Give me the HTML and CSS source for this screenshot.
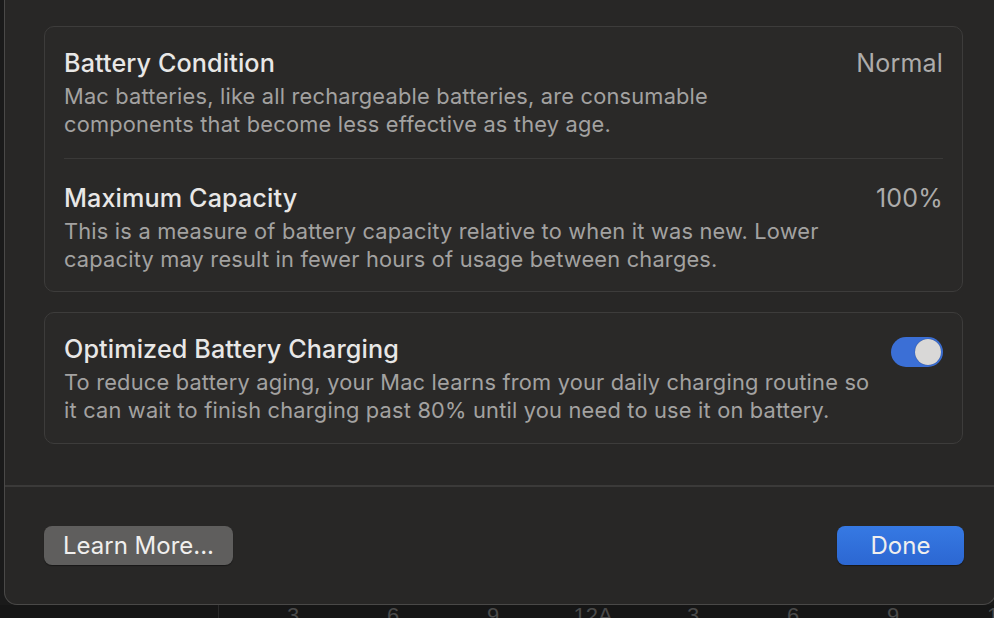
FILE: index.html
```html
<!DOCTYPE html>
<html>
<head>
<meta charset="utf-8">
<link rel="stylesheet" href="styles.css">
</head>
<body>
<div class="screen">
  <div class="sheet">
    <div class="content">
      <div class="group">
        <div class="row">
          <div class="row-text">
            <div class="title">Battery Condition</div>
            <div class="desc">Mac batteries, like all rechargeable batteries, are consumable<br>components that become less effective as they age.</div>
          </div>
          <div class="value">Normal</div>
        </div>
        <div class="divider"></div>
        <div class="row row-second">
          <div class="row-text">
            <div class="title">Maximum Capacity</div>
            <div class="desc">This is a measure of battery capacity relative to when it was new. Lower<br>capacity may result in fewer hours of usage between charges.</div>
          </div>
          <div class="value">100%</div>
        </div>
      </div>
      <div class="group group-two">
        <div class="row row-toggle">
          <div class="row-text">
            <div class="title">Optimized Battery Charging</div>
            <div class="desc">To reduce battery aging, your Mac learns from your daily charging routine so<br>it can wait to finish charging past 80% until you need to use it on battery.</div>
          </div>
          <div class="toggle"><div class="knob"></div></div>
        </div>
      </div>
    </div>
    <div class="footer">
      <button class="btn btn-secondary">Learn More...</button>
      <button class="btn btn-primary">Done</button>
    </div>
  </div>
  <div class="chart-axis">
    <span class="gridline"></span>
    <span class="tick t-first">3</span>
    <span class="tick">6</span>
    <span class="tick">9</span>
    <span class="tick">12A</span>
    <span class="tick">3</span>
    <span class="tick">6</span>
    <span class="tick">9</span>
    <span class="tick">1</span>
  </div>
</div>
</body>
</html>
```

FILE: styles.css
```css
* { box-sizing: border-box; }
html, body {
  margin: 0;
  padding: 0;
  background: #1a1a1a;
  overflow: hidden;
}
body {
  font-family: Inter, "Open Sans", "Liberation Sans", sans-serif;
  -webkit-font-smoothing: antialiased;
}
.screen {
  width: 994px;
  height: 618px;
  overflow: hidden;
  display: flex;
  flex-direction: column;
}
.sheet {
  margin-left: 4px;
  width: 992px;
  height: 605px;
  flex: none;
  background: #282726;
  border: 1px solid #4a4948;
  border-top: none;
  border-radius: 0 0 13px 13px;
  display: flex;
  flex-direction: column;
}
.content {
  padding: 26px 0 0 39px;
}
.group {
  width: 919px;
  border: 1px solid #3d3c3b;
  border-radius: 10px;
  background: #2a2928;
  padding: 21px 19px 18px 19px;
}
.group-two {
  margin-top: 20px;
  padding-top: 21px;
  padding-bottom: 19px;
}
.row {
  display: flex;
  justify-content: space-between;
  align-items: flex-start;
}
.row-text {
  display: flex;
  flex-direction: column;
}
.title {
  font-size: 25.2px;
  line-height: 30px;
  color: #e8e7e6;
  font-weight: 500;
  letter-spacing: 0.1px;
}
.desc {
  margin-top: 4px;
  font-size: 21.8px;
  line-height: 28px;
  color: #a3a2a1;
  letter-spacing: 0.2px;
}
.value {
  font-size: 25px;
  line-height: 30px;
  color: #adacab;
  letter-spacing: 0.2px;
}
.divider {
  height: 1px;
  background: #3a3938;
  margin: 20px 0 24px;
}
.toggle {
  margin-top: 3px;
  width: 52px;
  height: 30px;
  border-radius: 15px;
  background: #3b6fd6;
  display: flex;
  justify-content: flex-end;
  align-items: center;
  padding: 2px;
  flex: none;
}
.knob {
  width: 26px;
  height: 26px;
  border-radius: 50%;
  background: #d9d8d7;
  box-shadow: 0 0 1px rgba(0,0,0,0.5);
}
.footer {
  margin-top: 41px;
  border-top: 2px solid #3b3a39;
  padding: 39px 31px 0 39px;
  display: flex;
  justify-content: space-between;
}
.btn {
  font-family: Inter, "Open Sans", "Liberation Sans", sans-serif;
  height: 39px;
  border-radius: 8px;
  border: none;
  font-size: 24px;
  color: #f0efee;
  padding: 0;
  display: flex;
  align-items: center;
  justify-content: center;
}
.btn-secondary {
  width: 189px;
  background: #5f5e5d;
  box-shadow: 0 1px 1px rgba(0,0,0,0.4);
}
.btn-primary {
  width: 127px;
  background: linear-gradient(#3679e3, #2c67d2);
  box-shadow: 0 1px 1px rgba(0,0,0,0.4);
}
.chart-axis {
  flex: none;
  height: 13px;
  display: flex;
  align-items: flex-start;
  background: #161616;
}
.gridline {
  flex: none;
  width: 1px;
  height: 13px;
  background: #2a2a2a;
  margin-left: 218px;
}
.tick {
  flex: none;
  width: 100px;
  font-size: 22px;
  line-height: 22px;
  margin-top: 0;
  color: #4a4a4a;
  text-align: center;
  font-family: "Liberation Sans", sans-serif;
}
.t-first {
  margin-left: 24px;
}
```
